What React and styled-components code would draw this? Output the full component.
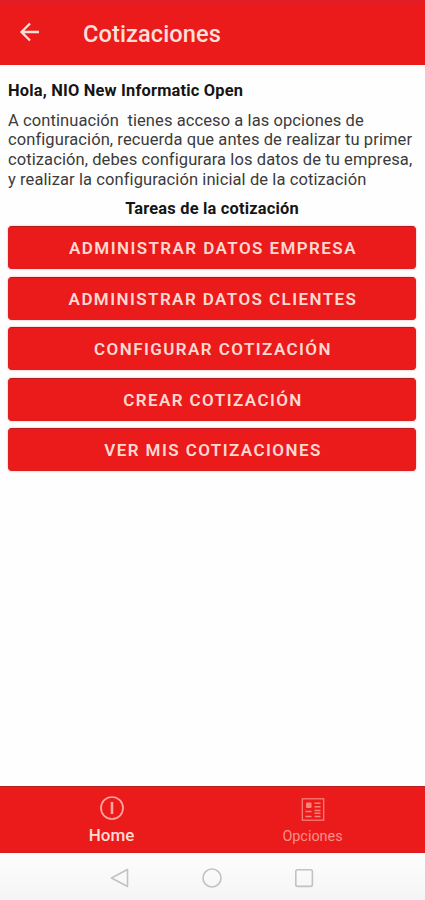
import React, { useState } from 'react';
import styled, { createGlobalStyle } from 'styled-components';

const GlobalStyle = createGlobalStyle`
  * {
    box-sizing: border-box;
  }

  body {
    margin: 0;
    background: #fefefe;
    font-family: Roboto, "Liberation Sans", sans-serif;
  }
`;

const Screen = styled.div`
  width: 100%;
  height: 100vh;
  display: flex;
  flex-direction: column;
  overflow: hidden;
  background: #fefefe;
`;

const Header = styled.header`
  height: 65px;
  flex-shrink: 0;
  display: flex;
  align-items: center;
  padding: 2px 0 0 18px;
  background: linear-gradient(#e11c26 0, #ec1b1b 6px);
`;

const BackButton = styled.button`
  width: 65px;
  height: 24px;
  padding: 0;
  border: none;
  background: none;
  cursor: pointer;
  display: flex;
  margin-top: -4px;
`;

const Title = styled.h1`
  margin: 0;
  color: #ffdfda;
  font-size: 23.6px;
  font-weight: 500;
  line-height: 28px;
  letter-spacing: 0.1px;
`;

const Content = styled.main`
  flex: 1;
  padding: 15px 9px 0 8px;
`;

const Greeting = styled.h2`
  margin: 0 0 9.5px;
  color: #151515;
  font-size: 16.4px;
  font-weight: 700;
  line-height: 21px;
  letter-spacing: 0.2px;
  white-space: nowrap;
`;

const Description = styled.p`
  margin: 0;
  color: #3b3b3b;
  font-size: 16.5px;
  line-height: 19.7px;
  letter-spacing: 0.09px;
  white-space: pre;
`;

const SectionTitle = styled.h3`
  margin: 9.5px 0 7.6px;
  color: #151515;
  font-size: 16.4px;
  font-weight: 700;
  line-height: 20px;
  letter-spacing: 0.2px;
  text-align: center;
`;

const TaskList = styled.div`
  display: flex;
  flex-direction: column;
  gap: 7.4px;
`;

const TaskButton = styled.button`
  height: 43px;
  border: 1px solid #dc2020;
  border-top-color: #b51a1c;
  border-radius: 4px;
  padding: 1px 0 0 2px;
  background: #ec1b1b;
  box-shadow: 0 0 2px rgba(225, 60, 60, 0.5);
  color: #ffd8d2;
  font-family: inherit;
  font-size: 17px;
  font-weight: 600;
  letter-spacing: 1.42px;
  text-transform: uppercase;
  cursor: pointer;
`;

const TabBar = styled.nav`
  height: 67px;
  flex-shrink: 0;
  display: flex;
  justify-content: center;
  padding-right: 1px;
  background: #ec1b1b;
  border-top: 1px solid #b82020;
  border-bottom: 1px solid #d51b1b;
`;

const Tab = styled.button`
  width: 201px;
  padding: 8px 0 0;
  border: none;
  background: none;
  display: flex;
  flex-direction: column;
  align-items: center;
  color: ${({ $active }) => ($active ? '#ffdcd6' : '#f7918a')};
  font-family: inherit;
  font-size: ${({ $active }) => ($active ? '17px' : '14.4px')};
  font-weight: ${({ $active }) => ($active ? 500 : 400)};
  line-height: 20px;
  cursor: pointer;

  svg {
    margin-bottom: ${({ $active }) => ($active ? '4px' : '6px')};
    color: ${({ $active }) => ($active ? '#ffa79e' : '#f7857e')};
  }
`;

const SystemBar = styled.div`
  height: 47px;
  flex-shrink: 0;
  display: flex;
  justify-content: center;
  align-items: center;
  gap: 68px;
  padding: 3px 1px 0 0;
  background: linear-gradient(#fdfdfd, #f5f5f5);
  color: #c2c2c2;
`;

const ArrowBack = () => (
  <svg width="24" height="24" viewBox="0 0 24 24" fill="none" stroke="#ffdfda" strokeWidth="2.3">
    <path d="M21 12H3.5M12 3.5L3.5 12l8.5 8.5" />
  </svg>
);

const InfoIcon = () => (
  <svg width="26" height="26" viewBox="0 0 26 26" fill="none" stroke="currentColor">
    <circle cx="13" cy="13" r="11" strokeWidth="1.7" />
    <path d="M13 7v12" strokeWidth="2.6" />
  </svg>
);

const OptionsIcon = () => (
  <svg width="26" height="26" viewBox="0 0 26 26" fill="none" stroke="currentColor">
    <rect x="2.3" y="3.8" width="21.4" height="21.4" strokeWidth="1.2" />
    <rect x="6" y="7.5" width="5.5" height="5.5" rx="1" fill="currentColor" stroke="none" />
    <path d="M14.5 8.2h6M14.5 11.7h6M14.5 15.4h6M14.5 18.2h6M14.5 21.4h6M5.5 16.4h6M5.5 21.4h6" strokeWidth="1.5" />
  </svg>
);

const tasks = [
  'Administrar datos empresa',
  'Administrar datos clientes',
  'Configurar cotización',
  'Crear cotización',
  'Ver mis cotizaciones',
];

const description = [
  'A continuación  tienes acceso a las opciones de',
  'configuración, recuerda que antes de realizar tu primer',
  'cotización, debes configurara los datos de tu empresa,',
  'y realizar la configuración inicial de la cotización',
].join('\n');

const App = () => {
  const [tab, setTab] = useState('home');

  return (
    <>
      <GlobalStyle />
      <Screen>
        <Header>
          <BackButton aria-label="Volver">
            <ArrowBack />
          </BackButton>
          <Title>Cotizaciones</Title>
        </Header>
        <Content>
          <Greeting>Hola, NIO New Informatic Open</Greeting>
          <Description>{description}</Description>
          <SectionTitle>Tareas de la cotización</SectionTitle>
          <TaskList>
            {tasks.map(task => (
              <TaskButton key={task}>{task}</TaskButton>
            ))}
          </TaskList>
        </Content>
        <TabBar>
          <Tab $active={tab === 'home'} onClick={() => setTab('home')}>
            <InfoIcon />
            Home
          </Tab>
          <Tab $active={tab === 'options'} onClick={() => setTab('options')}>
            <OptionsIcon />
            Opciones
          </Tab>
        </TabBar>
        <SystemBar>
          <svg width="24" height="24" viewBox="0 0 24 24" fill="none" stroke="currentColor" strokeWidth="1.6">
            <path d="M19.5 3.5v17L3.5 12z" strokeLinejoin="round" />
          </svg>
          <svg width="24" height="24" viewBox="0 0 24 24" fill="none" stroke="currentColor" strokeWidth="1.6">
            <circle cx="12" cy="12" r="9" />
          </svg>
          <svg width="24" height="24" viewBox="0 0 24 24" fill="none" stroke="currentColor" strokeWidth="1.6">
            <rect x="3.8" y="3.8" width="16.6" height="16.6" rx="1.8" />
          </svg>
        </SystemBar>
      </Screen>
    </>
  );
};

export default App;
